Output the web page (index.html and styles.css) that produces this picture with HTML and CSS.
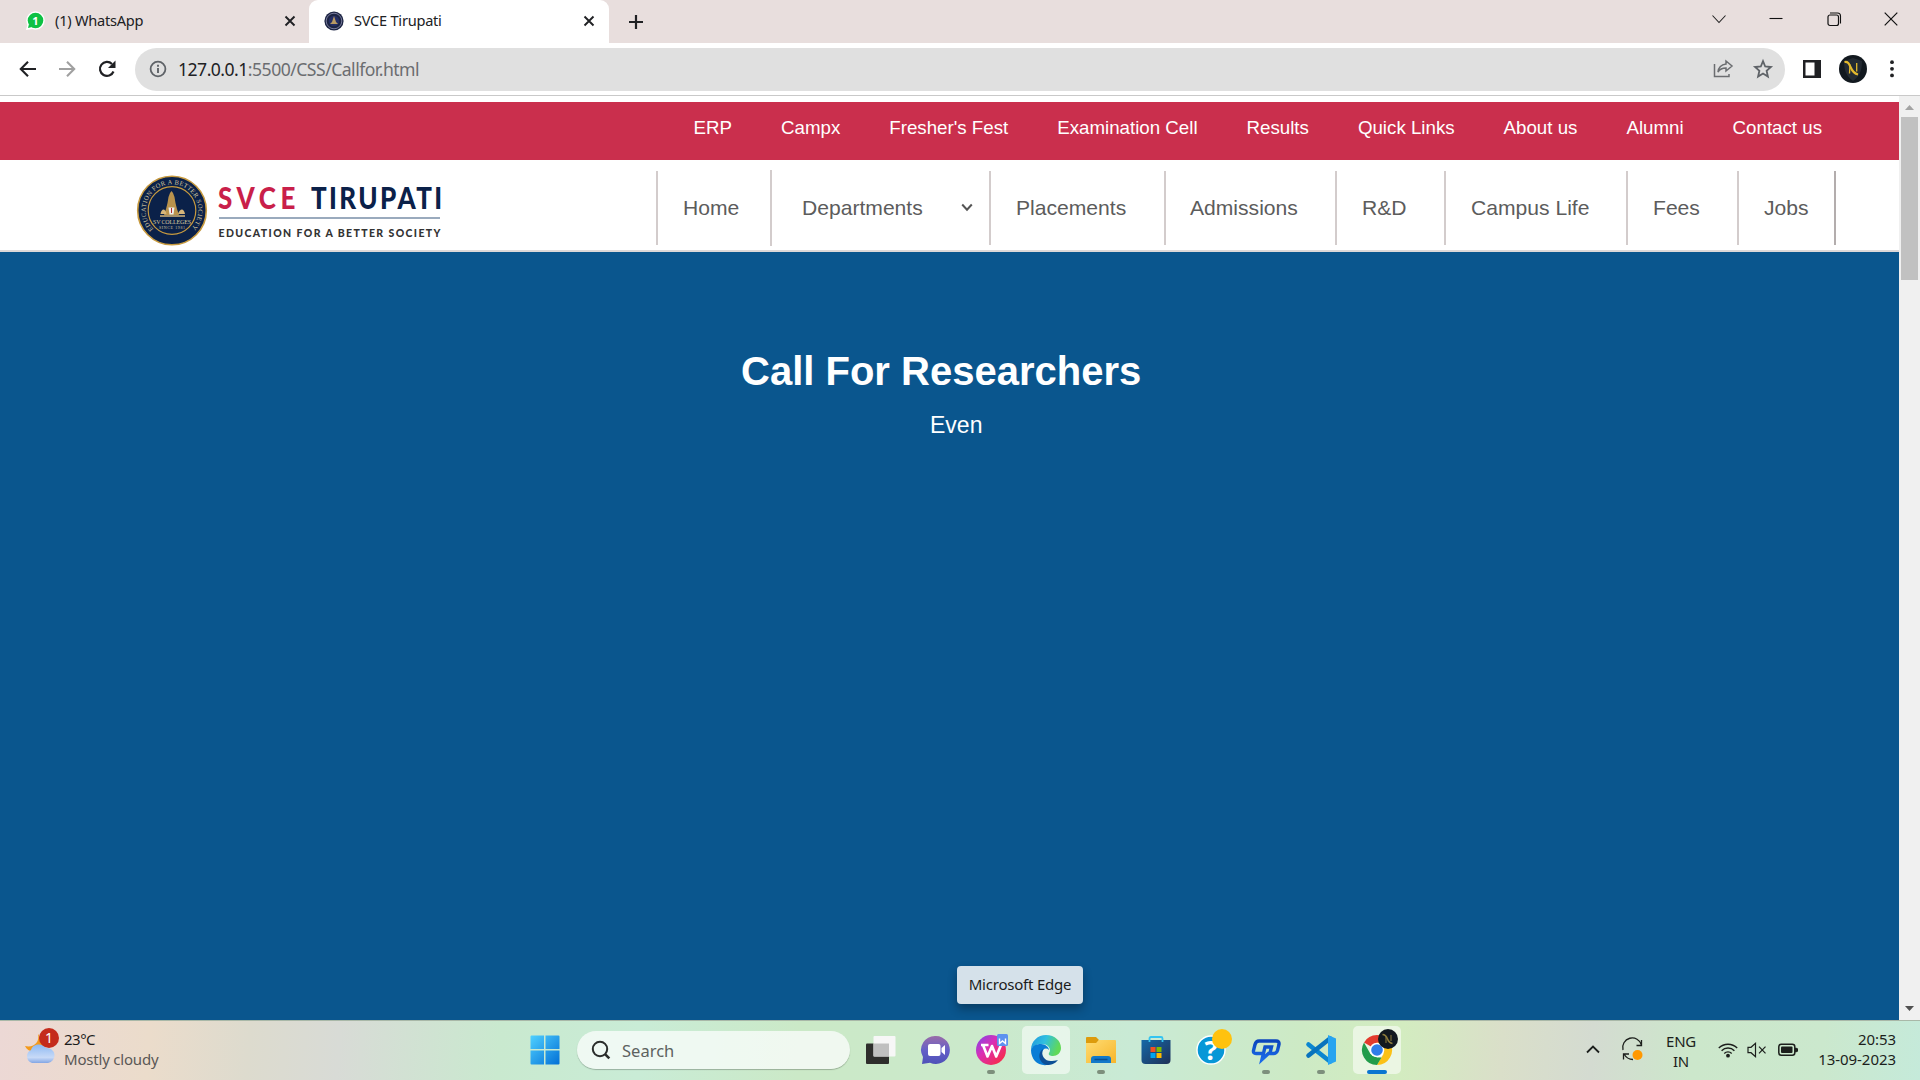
FILE: index.html
```html
<!DOCTYPE html>
<html lang="en">
<head>
<meta charset="utf-8">
<title>SVCE Tirupati</title>
<link rel="stylesheet" href="styles.css">
</head>
<body>
<div class="tabstrip">
  <div class="tab">
    <svg class="fav" width="20" height="20" viewBox="0 0 20 20"><circle cx="10.500" cy="9.500" r="9.200" fill="#fff"/><path d="M1 19l1.500-6 5 5z" fill="#fff"/><circle cx="10.500" cy="9.500" r="7.800" fill="#0dc143"/><path d="M3 17l1-4 3 3z" fill="#0dc143"/><text x="10.500" y="14" text-anchor="middle" class="fav-num">1</text></svg>
    <span class="tab-title t1">(1) WhatsApp</span>
    <svg class="x" width="12" height="12" viewBox="0 0 12 12"><path d="M1.500 1.500l9 9M10.500 1.500l-9 9" stroke="#202124" stroke-width="1.900"/></svg>
  </div>
  <div class="tab active">
    <svg class="fav" width="20" height="20" viewBox="0 0 20 20"><circle cx="10" cy="10" r="9.600" fill="#1c2443"/><circle cx="10" cy="10" r="7.800" fill="none" stroke="#77799a" stroke-width="1"/><circle cx="10" cy="10" r="5.300" fill="#242d63"/><path d="M10 5l2 6 2 2H6l2-2z" fill="#b99a62"/></svg>
    <span class="tab-title t2">SVCE Tirupati</span>
    <svg class="x" width="12" height="12" viewBox="0 0 12 12"><path d="M1.500 1.500l9 9M10.500 1.500l-9 9" stroke="#202124" stroke-width="1.900"/></svg>
  </div>
  <svg class="plus" width="16" height="16" viewBox="0 0 16 16"><path d="M8 1v14M1 8h14" stroke="#202124" stroke-width="2.200"/></svg>
  <div class="winctl">
    <svg width="14" height="14" viewBox="0 0 14 14"><path d="M.5 3.500l6.500 7 6.500-7" fill="none" stroke="#222" stroke-width="1.100"/></svg>
    <svg width="14" height="14" viewBox="0 0 14 14"><path d="M.5 6.500h13" stroke="#111" stroke-width="1.100"/></svg>
    <svg width="14" height="14" viewBox="0 0 14 14"><rect x="1" y="3" width="10.500" height="10.500" rx="2" fill="none" stroke="#111" stroke-width="1.200"/><path d="M3 1h7.500a3 3 0 0 1 3 3v7.500" fill="none" stroke="#111" stroke-width="1.100"/></svg>
    <svg width="14" height="14" viewBox="0 0 14 14"><path d="M.7.7l12.600 12.600M13.300.7L.7 13.300" stroke="#111" stroke-width="1.200"/></svg>
  </div>
</div>
<div class="toolbar">
  <svg class="back" width="18" height="18" viewBox="0 0 18 18"><path d="M17 9H2M9 1.800L1.800 9 9 16.200" fill="none" stroke="#202124" stroke-width="2.100"/></svg>
  <svg class="fwd" width="18" height="18" viewBox="0 0 18 18"><path d="M1 9h15M9 1.800L16.200 9 9 16.200" fill="none" stroke="#a0a0a0" stroke-width="2.100"/></svg>
  <svg class="reload" width="18" height="18" viewBox="0 0 18 18"><path d="M15.500 11.500A7 7 0 1 1 14 4" fill="none" stroke="#202124" stroke-width="2.200"/><path d="M17.500.5v7.500H10z" fill="#202124"/></svg>
  <div class="omnibox">
    <svg width="18" height="18" viewBox="0 0 18 18"><circle cx="9" cy="9" r="7.400" fill="none" stroke="#5f6368" stroke-width="1.800"/><path d="M9 8v5M9 4.800v2" stroke="#5f6368" stroke-width="1.900"/></svg>
    <span class="url"><b>127.0.0.1</b>:5500/CSS/Callfor.html</span>
    <svg class="share" width="20" height="20" viewBox="0 0 20 20"><path d="M1.500 5v12.500h14.500V15M13 2l6 5-6 5V9c-4 0-6.500 1.500-8 4 .5-4.500 3-7.300 8-8z" fill="none" stroke="#6b6d70" stroke-width="1.500"/></svg>
    <svg width="20" height="20" viewBox="0 0 20 20"><path d="M10 2.200l2.200 5.300 5.700.5-4.300 3.800 1.300 5.700-4.900-3-4.900 3 1.300-5.700L2.100 8l5.700-.5z" fill="none" stroke="#5f6368" stroke-width="1.800"/></svg>
  </div>
  <svg class="panel" width="18" height="18" viewBox="0 0 18 18"><path d="M0 0h18v18H0zM2.500 2.500v13h9v-13z" fill="#202124" fill-rule="evenodd"/></svg>
  <svg class="avatar" width="28" height="28" viewBox="0 0 28 28"><circle cx="14" cy="14" r="14" fill="#12191f"/><path d="M5 6l9-3 9 3c0 9-2 15-9 20C7 21 5 15 5 6z" fill="#242b33"/><path d="M5.500 7c3.500-.5 4.500 1.500 6 5s3 6.500 7.500 7.500" fill="none" stroke="#e3b92d" stroke-width="2.200"/><path d="M10.500 18.500l.5-9M17.700 16.500V8" fill="none" stroke="#e3b92d" stroke-width="1.300"/></svg>
  <svg class="dots" width="4" height="18" viewBox="0 0 4 18"><g fill="#202124"><circle cx="2" cy="2.200" r="1.900"/><circle cx="2" cy="8.800" r="1.900"/><circle cx="2" cy="15.400" r="1.900"/></g></svg>
</div>
<div class="viewport">
  <div class="page">
    <nav class="links">
      <a>ERP</a><a>Campx</a><a>Fresher's Fest</a><a>Examination Cell</a><a>Results</a><a>Quick Links</a><a>About us</a><a>Alumni</a><a>Contact us</a>
    </nav>
    <header class="site">
      <svg class="logo" width="310" height="80" viewBox="135 170 310 80">
        <defs><path id="ring" d="M153.400 229.100A26.300 26.300 0 1 1 190.600 229.100"/></defs>
        <circle cx="172" cy="210.500" r="34.300" fill="#0b2149" stroke="#c79a3f" stroke-width="1.600"/>
        <circle cx="172" cy="210.500" r="23.800" fill="none" stroke="#c79a3f" stroke-width="1.200"/>
        <text class="ring-text"><textPath href="#ring" textLength="122">EDUCATION FOR A BETTER SOCIETY</textPath></text>
        <path d="M171.500 191l1.500 2 1.500 4 1 6 1.500 6 2 6h-15l2-6 1.500-6 1-6 1.500-4z" fill="#b9924d"/>
        <path d="M160.500 214c1-6 5-6 6 0zM178 214c2-6 6-6 7 0z" fill="#d6b57a"/><path d="M160 216h25" fill="none" stroke="#d6b57a" stroke-width="1.500"/>
        <path d="M168.500 207.500h6l-1 7h-4z" fill="#eee"/><path d="M171.500 208v5" stroke="#b52b2b"/>
        <text class="ring-mid" x="172" y="223.500" text-anchor="middle" textLength="38">SV COLLEGES</text>
        <text class="ring-low" x="172" y="229" text-anchor="middle" textLength="26">SINCE 1981</text>
        <g transform="translate(218 209) scale(.88 1)"><text class="brand svce" textLength="88">SVCE</text></g>
        <g transform="translate(311 209) scale(.88 1)"><text class="brand tiru" textLength="149">TIRUPATI</text></g>
        <path d="M219 218h221" stroke="#9aaabd" stroke-width="2"/>
        <text class="motto" x="218.500" y="236.500" textLength="222">EDUCATION FOR A BETTER SOCIETY</text>
      </svg>
      <nav class="menu">
        <a class="m1">Home</a><a class="m2">Departments<svg width="12" height="9" viewBox="0 0 12 9"><path d="M1.200 1.500L6 6.700l4.800-5.200" fill="none" stroke="#555" stroke-width="2"/></svg></a><a class="m3">Placements</a><a class="m4">Admissions</a><a class="m5">R&amp;D</a><a class="m6">Campus Life</a><a class="m7">Fees</a><a class="m8">Jobs</a>
      </nav>
    </header>
    <main class="hero">
      <h1>Call For Researchers</h1>
      <p>Even</p>
    </main>
  </div>
  <div class="scroll">
    <svg width="21" height="21" viewBox="0 0 21 21"><path d="M6 14h9l-4.500-5z" fill="#a3a3a3"/></svg>
    <div class="thumb"></div>
    <svg class="down" width="21" height="21" viewBox="0 0 21 21"><path d="M6 7h9l-4.500 5z" fill="#505050"/></svg>
  </div>
</div>
<div class="tip">Microsoft Edge</div>
<footer class="taskbar">
  <div class="weather">
    <svg width="38" height="40" viewBox="22 1026 38 40"><defs><linearGradient id="cl" x2="0" y2="1"><stop stop-color="#8db9f3"/><stop offset=".7" stop-color="#c8daf7"/><stop offset="1" stop-color="#83a6e4"/></linearGradient></defs><path d="M38 1034c2 8-4 14-13 12 3 8 16 7 20-3z" fill="#f39a1c"/><path d="M32 1063a7 7 0 0 1-1-13c2-7 12-7 15-2a7.500 7.500 0 0 1 2 15z" fill="url(#cl)"/><circle cx="49" cy="1038" r="10" fill="#c42b1c"/><text class="badge-num" x="49" y="1043" text-anchor="middle">1</text></svg>
    <div class="lines"><span class="deg">23°C</span><span class="sky">Mostly cloudy</span></div>
  </div>
  <div class="apps">
    <span class="app"><svg width="30" height="30" viewBox="0 0 30 30"><defs><linearGradient id="win" x2="1" y2="1"><stop stop-color="#4fd0ff"/><stop offset="1" stop-color="#0370d6"/></linearGradient></defs><path d="M.5 1.500q0-1 1-1H14v13.500H.5zM15.500.5h13q1 0 1 1V14h-14zM.5 15.500H14v14H1.500q-1 0-1-1zM15.500 15.500h14v13q0 1-1 1h-13z" fill="url(#win)"/></svg></span>
    <div class="search"><svg width="20" height="20" viewBox="0 0 20 20"><circle cx="9" cy="9" r="7.200" fill="none" stroke="#2a2d2b" stroke-width="2"/><path d="M13.800 13.800l4.500 4.500" stroke="#2a2d2b" stroke-width="2.600"/></svg><span>Search</span></div>
    <span class="app"><svg width="30" height="30" viewBox="0 0 30 30"><rect x="0" y="8.500" width="23" height="20.500" rx="1" fill="#2e2e2c"/><rect x="7.500" y="1" width="22" height="20.500" rx="1" fill="#f7f7f7"/><path d="M7.500 8.500H23v13H7.500z" fill="#c0c0c0"/></svg></span>
    <span class="app"><svg width="30" height="30" viewBox="0 0 30 30"><defs><linearGradient id="cm" x2="0" y2="1"><stop stop-color="#9a6ca8"/><stop offset=".5" stop-color="#6560c8"/><stop offset="1" stop-color="#4e50b8"/></linearGradient></defs><path d="M15 1a14 14 0 1 1-6 26.700L1 29l1-7A14 14 0 0 1 15 1z" fill="url(#cm)"/><rect x="7" y="9" width="12.500" height="12" rx="2" fill="#fff"/><path d="M20.500 13l3.500-3v10l-3.500-3z" fill="#fff"/></svg></span>
    <span class="app run"><svg width="34" height="34" viewBox="-2 -2 34 34"><defs><linearGradient id="wp" x1="0" x2="1" y2="1"><stop stop-color="#7a45f0"/><stop offset=".4" stop-color="#d930b5"/><stop offset="1" stop-color="#ff2a30"/></linearGradient></defs><circle cx="15" cy="15" r="15" fill="url(#wp)"/><path d="M5 10h7.500M7 10l4.500 11.500L16 11l4.200 10.500L25 10" fill="none" stroke="#fff" stroke-width="2.600" stroke-linejoin="round"/><rect x="21" y="-1" width="11" height="12" rx="1.500" fill="#5c92ef"/><path d="M23.500 3.500v5l3-2.500 3 2.500v-5" fill="none" stroke="#fff" stroke-width="1.400"/></svg></span>
    <span class="app hover"><svg width="30" height="30" viewBox="0 0 30 30"><defs><linearGradient id="ed" x2="1" y2=".3"><stop stop-color="#2095dd"/><stop offset=".5" stop-color="#30bfe0"/><stop offset="1" stop-color="#61d957"/></linearGradient></defs><path d="M15 0c9 0 15 6 15 13 0 5-4 8-8 8-3 0-5-1-4-3 3-4-1-9-7-9C5 9 1 12 0 15 0 6 7 0 15 0z" fill="url(#ed)"/><path d="M0 15c1-4 5-6 10-6 4 0 8 3 8 6-3-3-7-1-7 4 0 6 5 10 9 10C9 33 0 26 0 15z" fill="#0a7dd6"/><path d="M12 14c-3 7 3 13 9 12 3 0 5-1 6-1-3 4-7 5-11 5-7-1-11-11-4-16z" fill="#0c4f96"/></svg></span>
    <span class="app run"><svg width="30" height="30" viewBox="0 0 30 30"><defs><linearGradient id="fo" x2="1" y2="1"><stop stop-color="#ffdc73"/><stop offset="1" stop-color="#f7b52a"/></linearGradient></defs><path d="M0 3q0-1 1-1h9l3 3-3 4H0z" fill="#dd9b0d"/><path d="M0 8h10l3-3h16q1 0 1 1v22H0z" fill="url(#fo)"/><path d="M5 28v-4q0-3 3-3h14q3 0 3 3v4z" fill="#1379c9"/><path d="M8.500 24.500h13" stroke="#0a4f91" stroke-width="1.500"/></svg></span>
    <span class="app"><svg width="30" height="30" viewBox="0 0 30 30"><defs><linearGradient id="st" x2="1" y2="1"><stop stop-color="#1568a8"/><stop offset="1" stop-color="#1f3157"/></linearGradient></defs><path d="M.5 5h29v20q0 4-4 4h-21q-4 0-4-4z" fill="url(#st)"/><path d="M8.500 7V3.500q0-1.500 1.500-1.500h10q1.500 0 1.500 1.500V7" fill="none" stroke="#34c4f1" stroke-width="1.800"/><path d="M9.500 12h5v5h-5z" fill="#f25022"/><path d="M15.500 12h5v5h-5z" fill="#7fba00"/><path d="M9.500 18h5v5h-5z" fill="#00a4ef"/><path d="M15.500 18h5v5h-5z" fill="#ffb900"/></svg></span>
    <span class="app"><svg width="38" height="38" viewBox="-6 -4 38 38"><circle cx="13" cy="15" r="14" fill="#0797d7" stroke="#fff" stroke-width="1.400"/><text class="help" x="13" y="25" text-anchor="middle">?</text><circle cx="24" cy="4" r="10" fill="#ffc20e"/></svg></span>
    <span class="app run"><svg width="30" height="30" viewBox="0 0 30 30"><defs><linearGradient id="cp" x2="0" y2="1"><stop stop-color="#0b45bd"/><stop offset="1" stop-color="#1a6ae8"/></linearGradient></defs><path d="M11 18.500H5q-3 0-2.500-3l1.500-6q1-3.500 4-3.500h17q3.500 0 3 3.500l-1.500 6q-1 3-4 3h-5l-6.500 6L14 12h6.500l-1.500 6" fill="none" stroke="url(#cp)" stroke-width="3.400"/></svg></span>
    <span class="app run"><svg width="30" height="30" viewBox="0 0 30 30"><path d="M2.500 9.500L24 26.500" stroke="#0b86d0" stroke-width="4.600" stroke-linecap="round"/><path d="M2.500 20.500L24 3.500" stroke="#0873bd" stroke-width="4.600" stroke-linecap="round"/><path d="M22 0l8 3.500v23L22 30z" fill="#27a4f0"/></svg></span>
    <span class="app hover chrome"><svg width="38" height="38" viewBox="-4 -4 38 38"><path d="M15 15L2 7.500A15 15 0 0 1 28 7.500z" fill="#e33b2e"/><path d="M15 7.500h13A15 15 0 0 1 15 30l6.500-11z" fill="#fbc116"/><path d="M2 7.500L8.500 19l7 3.500h4L15 30A15 15 0 0 1 2 7.500z" fill="#229c4b"/><circle cx="15" cy="15" r="7.300" fill="#fff"/><circle cx="15" cy="15" r="5.800" fill="#2f7de9"/><circle cx="26" cy="4" r="10" fill="#12191f"/><path d="M20.500-.5c3 0 4 2 5 4.500s2 4 5 4.500" fill="none" stroke="#8e7d3c" stroke-width="1.600"/><path d="M24 8V1.500M29 6V0" fill="none" stroke="#8e7d3c"/></svg></span>
  </div>
  <div class="tray">
    <svg class="chev" width="14" height="9" viewBox="0 0 14 9"><path d="M1 7.500l6-6 6 6" fill="none" stroke="#1c1f1c" stroke-width="1.800"/></svg>
    <svg class="upd" width="22" height="22" viewBox="0 0 22 22"><path d="M1 11A9.500 9.500 0 0 1 19.500 6M19.500 1v5.500h-5M11 20.500c-4 0-7-2-9-5.500M1.500 20.500V15H7" fill="none" stroke="#1c1f1c" stroke-width="1.300"/><circle cx="15.500" cy="16" r="5" fill="#ff9800"/></svg>
    <div class="lang"><span>ENG</span><span>IN</span></div>
    <svg class="wifi" width="20" height="16" viewBox="0 0 20 16"><g fill="none" stroke="#1c1f1c" stroke-width="1.400"><path d="M.8 6a13 13 0 0 1 18.400 0M3.600 8.700a9 9 0 0 1 12.800 0M6.300 11.400a5.300 5.300 0 0 1 7.400 0"/></g><circle cx="10" cy="13.700" r="1.900" fill="#1c1f1c"/></svg>
    <svg class="spk" width="20" height="16" viewBox="0 0 20 16"><path d="M1 5.300h3l4.500-4v13.400L4 10.700H1zM12 4.700l6.500 6.600M18.500 4.700L12 11.300" fill="none" stroke="#1c1f1c" stroke-width="1.200"/></svg>
    <svg class="bat" width="20" height="14" viewBox="0 0 20 14"><rect x=".8" y="1.300" width="16" height="11" rx="2.500" fill="none" stroke="#1c1f1c" stroke-width="1.500"/><rect x="3" y="3.500" width="11.500" height="6.600" rx="1" fill="#1c1f1c"/><path d="M17.500 5l2 .7v2.600l-2 .7z" fill="#1c1f1c" stroke="#1c1f1c"/></svg>
    <div class="clock"><span class="time">20:53</span><span class="date">13-09-2023</span></div>
  </div>
</footer>
</body>
</html>
```
FILE: styles.css
```css
* { box-sizing: border-box; }
body { margin: 0; width: 1920px; height: 1080px; overflow: hidden; display: flex; flex-direction: column; font-family: "Noto Sans", sans-serif; background: #fff; position: relative; }
svg { flex: none; display: block; overflow: visible; }
.tabstrip { height: 43px; background: #e8dedd; display: flex; align-items: center; flex: none; }
.tab { height: 43px; width: 309px; display: flex; align-items: center; padding: 0 13px 2px 25px; font-size: 14.600px; color: #202124; }
.tab.active { width: 300px; background: #fff; border-radius: 9px 9px 0 0; padding: 0 14px 2px 15px; }
.tab-title { margin-left: 10px; flex: 1; white-space: nowrap; padding-bottom: 1px; }
.t1 { letter-spacing: -.25px; }
.t2 { letter-spacing: -.25px; }
.fav-num { font: bold 11px "Noto Sans", sans-serif; fill: #fff; }
.plus { margin-left: 19px; }
.winctl { margin-left: auto; display: flex; gap: 43.500px; padding: 0 22px 6px 0; }
.toolbar { height: 53px; background: #fff; border-bottom: 1px solid #c9c9c9; display: flex; align-items: center; padding: 0 25px 0 19px; flex: none; }
.fwd { margin-left: 21px; }
.reload { margin-left: 22px; }
.omnibox { margin-left: 19px; width: 1650px; height: 43px; border-radius: 22px; background: #e0e0e0; display: flex; align-items: center; padding: 0 12px 0 14px; }
.url { margin-left: 11px; font-size: 17.600px; color: #6b6d70; letter-spacing: -.52px; flex: 1; }
.url b { font-weight: 400; color: #202124; }
.share { margin-right: 20px; }
.panel { margin-left: 18px; }
.avatar { margin-left: 18px; }
.dots { margin-left: 23px; }
.viewport { height: 924px; display: flex; flex: none; }
.page { width: 1899px; padding-top: 6px; font-family: "Liberation Sans", sans-serif; display: flex; flex-direction: column; }
.links { height: 58px; background: #ca2f4d; color: #fff; display: flex; justify-content: flex-end; gap: 49px; padding: 15px 77px 0 0; font-size: 18.720px; line-height: 22px; }
.site { height: 92px; border-bottom: 2px solid #ddd8d8; display: flex; padding-left: 135px; }
.logo { margin-top: 10px; }
.menu { margin-left: 211px; padding-top: 11px; display: flex; color: #5c5c5c; font-size: 21.100px; line-height: 73px; }
.menu a { height: 74px; border-left: 2px solid #d3cccc; padding-left: 25px; white-space: nowrap; }
.menu .m1 { width: 114px; }
.menu .m2 { width: 219px; height: 76px; margin-top: -1px; padding: 0 16px 1px 30px; display: flex; align-items: center; justify-content: space-between; }
.menu .m3 { width: 175px; }
.menu .m4 { width: 171px; padding-left: 24px; }
.menu .m5 { width: 109px; }
.menu .m6 { width: 182px; }
.menu .m7 { width: 111px; }
.menu .m8 { width: 99px; border-right: 2px solid #b3adad; }
.ring-text { font: 6.500px "Liberation Serif", serif; fill: #d5c79f; }
.ring-mid { font: 6px "Liberation Serif", serif; fill: #d5c79f; }
.ring-low { font: 4px "Liberation Serif", serif; fill: #d5c79f; }
.brand { font: 900 29.500px Lato, sans-serif; }
.svce { fill: #c91f4a; }
.tiru { fill: #0b2149; }
.motto { font: 900 10.500px Lato, sans-serif; fill: #333; }
.hero { flex: 1; background: #0a568e; color: #fff; padding-top: 96px; display: flex; flex-direction: column; }
.hero h1 { margin: 0 0 0 741px; font-size: 40px; line-height: 46px; white-space: nowrap; }
.hero p { margin: 18px 0 0 930px; font-size: 23px; line-height: 26px; }
.scroll { width: 21px; background: #f0f0f0; display: flex; flex-direction: column; align-items: center; }
.thumb { width: 17px; height: 163px; background: #c1c1c1; }
.down { margin-top: auto; }
.tip { position: absolute; left: 957px; top: 966px; width: 126px; height: 38px; border-radius: 4px; background: #d5e1ea; box-shadow: 0 5px 10px rgba(0,0,0,.3); color: #1b1b1b; font-size: 15px; line-height: 37px; text-align: center; letter-spacing: -.22px; white-space: nowrap; }
.taskbar { height: 60px; flex: none; border-top: 1px solid #a9b8a8; display: flex; position: relative; background: linear-gradient(94deg, #ecd8d5 0, #ebdccb 150px, #dddbce 250px, #d8dbd6 340px, #c9e9cf 500px, #c9ecd6 640px, #cbe9c7 800px, #cbe9cb 980px, #c9ead5 1130px, #cdeac5 1300px, #d3ecc0 1400px, #dadfc9 1500px, #d4dbd1 1590px, #cce7cb 1690px, #cbe8cd 1820px, #c5eada 1920px); }
.weather { width: 517px; display: flex; padding: 5px 0 0 22px; }
.lines { display: flex; flex-direction: column; margin-left: 4px; font-size: 15px; line-height: 20px; padding-top: 3px; color: #1c1c1c; }
.deg { letter-spacing: -.5px; }
.sky { color: #5a5856; letter-spacing: -.2px; }
.badge-num { font: 14px "Noto Sans", sans-serif; fill: #fff; }
.apps { display: flex; gap: 7.050px; align-items: center; }
.app { width: 48px; height: 48px; display: flex; align-items: center; justify-content: center; border-radius: 5px; position: relative; margin-top: -1px; }
.app:first-child { margin-left: 4px; }
.hover { background: rgba(255,255,255,.55); }
.run::after, .chrome::after { content: ""; position: absolute; bottom: 0; left: 20px; width: 8px; height: 4px; border-radius: 2px; background: #7d8f7c; }
.chrome::after { left: 14px; width: 20px; background: #0a76d0; }
.search { width: 273px; height: 38px; border-radius: 19px; background: rgba(250,252,251,.78); box-shadow: 0 1px 1px rgba(0,0,0,.25); display: flex; align-items: center; padding-left: 14px; font-size: 16.500px; color: #5d625f; gap: 11px; margin: -1px 0 0 1px; }
.help { font: bold 27px "Noto Sans", sans-serif; fill: #fff; }
.tray { margin-left: auto; display: flex; align-items: center; padding: 0 24px 2px 0; color: #1c1f1c; font-size: 15px; line-height: 20px; }
.upd { margin-left: 22px; }
.lang { width: 44px; margin-left: 15px; padding-top: 2px; display: flex; flex-direction: column; align-items: center; letter-spacing: -.3px; }
.wifi { margin-left: 15px; }
.spk { margin-left: 9px; }
.bat { margin-left: 11px; }
.clock { margin-left: 18px; width: 80px; display: flex; flex-direction: column; align-items: flex-end; letter-spacing: -.05px; padding-bottom: 2px; }
```
